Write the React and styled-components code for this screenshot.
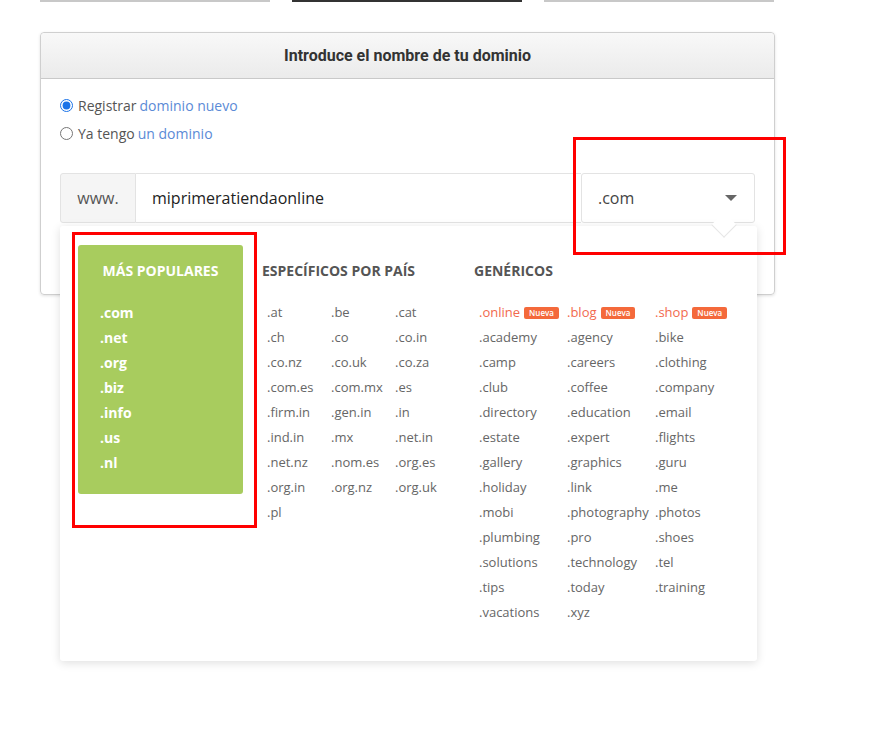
import React from 'react';
import styled, { createGlobalStyle } from 'styled-components';

const GlobalStyle = createGlobalStyle`
  body {
    margin: 0;
    background: #fff;
    font-family: 'Open Sans', 'Liberation Sans', sans-serif;
    color: #555;
  }
`;

const popular = ['.com', '.net', '.org', '.biz', '.info', '.us', '.nl'];

const countries = [
  '.at', '.be', '.cat', '.ch', '.co', '.co.in', '.co.nz', '.co.uk', '.co.za',
  '.com.es', '.com.mx', '.es', '.firm.in', '.gen.in', '.in', '.ind.in', '.mx', '.net.in',
  '.net.nz', '.nom.es', '.org.es', '.org.in', '.org.nz', '.org.uk', '.pl',
];

const generics = [
  { name: '.online', isNew: true }, { name: '.blog', isNew: true }, { name: '.shop', isNew: true },
  '.academy', '.agency', '.bike', '.camp', '.careers', '.clothing', '.club', '.coffee', '.company',
  '.directory', '.education', '.email', '.estate', '.expert', '.flights', '.gallery', '.graphics',
  '.guru', '.holiday', '.link', '.me', '.mobi', '.photography', '.photos', '.plumbing', '.pro',
  '.shoes', '.solutions', '.technology', '.tel', '.tips', '.today', '.training', '.vacations', '.xyz',
].map(item => (typeof item === 'string' ? { name: item, isNew: false } : item));

export default function App() {
  return (
    <Page>
      <GlobalStyle />
      <Tabs>
        <Tab />
        <Tab active />
        <Tab />
      </Tabs>

      <Card>
        <CardHeader>Introduce el nombre de tu dominio</CardHeader>
        <CardBody>
          <RadioRow>
            <Radio type="radio" name="mode" defaultChecked />
            Registrar <Link>dominio nuevo</Link>
          </RadioRow>
          <RadioRow>
            <Radio type="radio" name="mode" />
            Ya tengo <Link>un dominio</Link>
          </RadioRow>

          <InputWrap>
            <InputGroup>
              <Addon>www.</Addon>
              <DomainInput defaultValue="miprimeratiendaonline" />
              <Select>
                .com
                <Caret />
              </Select>
            </InputGroup>

            <Dropdown>
              <Pointer />
              <PopularBox>
                <Heading center light>MÁS POPULARES</Heading>
                <PopularList>
                  {popular.map(item => <PopularItem key={item}>{item}</PopularItem>)}
                </PopularList>
              </PopularBox>

              <Column width={193}>
                <Heading>ESPECÍFICOS POR PAÍS</Heading>
                <DomainGrid col={64}>
                  {countries.map(item => <Domain key={item}>{item}</Domain>)}
                </DomainGrid>
              </Column>

              <Column width={264}>
                <Heading>GENÉRICOS</Heading>
                <DomainGrid col={88}>
                  {generics.map(item => (
                    <Domain key={item.name} hot={item.isNew}>
                      {item.name}
                      {item.isNew && <Badge>Nueva</Badge>}
                    </Domain>
                  ))}
                </DomainGrid>
              </Column>
            </Dropdown>
          </InputWrap>
        </CardBody>
      </Card>

      <Highlight style={{ left: 72, top: 232, width: 185, height: 296 }} />
      <Highlight style={{ left: 573, top: 137, width: 213, height: 118 }} />
    </Page>
  );
}

const Page = styled.div`
  position: relative;
  width: 876px;
  min-height: 738px;
  padding: 0 0 0 40px;
  box-sizing: border-box;
`;

const Tabs = styled.div`
  display: flex;
  gap: 22px;
  width: 735px;
`;

const Tab = styled.div`
  width: 230px;
  height: 2px;
  background: ${props => (props.active ? '#333' : '#c8c8c8')};
`;

const Card = styled.div`
  margin-top: 30px;
  width: 735px;
  border: 1px solid #cfcfcf;
  border-radius: 4px;
  box-shadow: 0 1px 3px rgba(0, 0, 0, 0.12);
  box-sizing: border-box;
`;

const CardHeader = styled.div`
  height: 45px;
  line-height: 45px;
  text-align: center;
  font-family: Roboto, 'Liberation Sans', sans-serif;
  font-weight: 700;
  font-size: 16px;
  color: #333;
  background: linear-gradient(#f8f8f8, #ebebeb);
  border-bottom: 1px solid #c9c9c9;
  border-radius: 4px 4px 0 0;
`;

const CardBody = styled.div`
  padding: 12px 19px 71px;
`;

const RadioRow = styled.label`
  display: flex;
  align-items: center;
  gap: 3px;
  height: 28px;
  font-size: 14px;
  color: #555;
`;

const Radio = styled.input`
  margin: 0 2px 0 0;
  width: 13px;
  height: 13px;
  accent-color: #1a73e8;
`;

const Link = styled.span`
  color: #5b8ad6;
`;

const InputWrap = styled.div`
  position: relative;
  margin-top: 26px;
`;

const InputGroup = styled.div`
  display: flex;
  height: 50px;
  width: 695px;
`;

const Addon = styled.div`
  display: flex;
  align-items: center;
  justify-content: center;
  width: 76px;
  background: #f5f5f5;
  border: 1px solid #e3e3e3;
  border-radius: 3px 0 0 3px;
  font-size: 16px;
  color: #555;
  box-sizing: border-box;
`;

const DomainInput = styled.input`
  width: 445px;
  border: 1px solid #e3e3e3;
  border-left: none;
  border-right: none;
  padding: 0 16px;
  font-family: 'Open Sans', 'Liberation Sans', sans-serif;
  font-size: 16px;
  color: #222;
  outline: none;
  box-sizing: border-box;
`;

const Select = styled.div`
  flex: 1;
  display: flex;
  align-items: center;
  justify-content: space-between;
  padding: 0 17px 0 16px;
  border: 1px solid #e3e3e3;
  border-radius: 3px;
  font-size: 16px;
  color: #444;
  box-sizing: border-box;
`;

const Caret = styled.span`
  width: 0;
  height: 0;
  border-left: 6px solid transparent;
  border-right: 6px solid transparent;
  border-top: 6px solid #666;
`;

const Dropdown = styled.div`
  position: absolute;
  top: calc(100% + 3px);
  left: 0;
  width: 697px;
  height: 435px;
  display: flex;
  gap: 19px;
  padding: 19px 18px;
  box-sizing: border-box;
  background: #fff;
  box-shadow: 0 2px 10px rgba(0, 0, 0, 0.13);
  border-radius: 3px;
`;

const Pointer = styled.span`
  position: absolute;
  top: -10px;
  left: 655px;
  width: 17px;
  height: 17px;
  background: #fff;
  border-right: 1px solid #e6e6e6;
  border-bottom: 1px solid #e6e6e6;
  transform: rotate(45deg);
`;

const PopularBox = styled.div`
  flex-shrink: 0;
  width: 165px;
  align-self: flex-start;
  padding: 17px 0 19px;
  background: #a8cc5e;
  border-radius: 3px;
  box-sizing: border-box;
`;

const Column = styled.div`
  flex-shrink: 0;
  width: ${props => props.width}px;
  padding-top: 17px;
`;

const Heading = styled.div`
  font-size: 14px;
  line-height: 18px;
  font-weight: 700;
  color: ${props => (props.light ? '#fff' : '#555')};
  text-align: ${props => (props.center ? 'center' : 'left')};
`;

const PopularList = styled.div`
  margin-top: 20px;
  padding-left: 22px;
`;

const PopularItem = styled.div`
  font-size: 14px;
  font-weight: 700;
  line-height: 25px;
  color: #fff;
`;

const DomainGrid = styled.div`
  display: grid;
  grid-template-columns: repeat(3, ${props => props.col}px);
  margin-top: 20px;
  padding-left: 5px;
`;

const Domain = styled.div`
  display: flex;
  align-items: center;
  gap: 4px;
  font-size: 13px;
  line-height: 25px;
  white-space: nowrap;
  color: ${props => (props.hot ? '#f2694e' : '#666')};
`;

const Badge = styled.span`
  display: inline-block;
  height: 12px;
  line-height: 12px;
  padding: 0 5px;
  background: #f4693b;
  border-radius: 2px;
  font-size: 8px;
  font-weight: 600;
  color: #fff;
`;

const Highlight = styled.div`
  position: absolute;
  border: 3px solid #f00;
  box-sizing: border-box;
  pointer-events: none;
`;
